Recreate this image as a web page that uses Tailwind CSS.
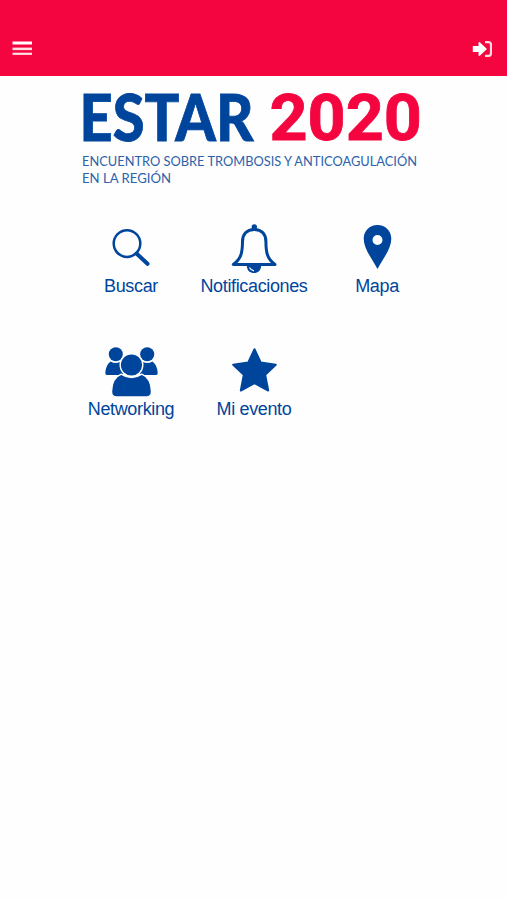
<!DOCTYPE html>
<html lang="es">
<head>
  <meta charset="UTF-8">
  <meta name="viewport" content="width=device-width, initial-scale=1.0">
  <title>ESTAR 2020</title>
  <script src="https://cdn.jsdelivr.net/npm/@tailwindcss/browser@4"></script>
</head>
<body class="min-h-screen bg-[#fefefe] font-['Liberation_Sans',sans-serif] text-[#00459c]">
  <header class="flex h-[76px] items-end justify-between bg-[#f5053f] px-3 pb-[17px] text-white">
    <button aria-label="Menú">
      <svg class="block h-5 w-5" viewBox="0 0 20 20" fill="#ffdfe6">
        <rect x="0.5" y="2.5" width="19.5" height="3" fill="#fff" />
        <rect x="0.5" y="8.6" width="19.5" height="2.5" />
        <rect x="0.5" y="13.7" width="19.5" height="2.2" />
      </svg>
    </button>
    <button aria-label="Ingresar" class="mr-[3px]">
      <svg class="block h-5 w-5" viewBox="0 0 20 20">
        <path d="M0.8 7H6.5V3.6L7.5 3L15 10L7.5 17L6.5 16.4V13H0.8Z" fill="#fff" />
        <path d="M13 3.2H16.5Q19 3.2 19 5.7V14.3Q19 16.8 16.5 16.8H13" fill="none" stroke="#ffdbe3" stroke-width="2.2" />
      </svg>
    </button>
  </header>

  <main>
    <!-- Logo -->
    <svg class="mx-auto block h-[124px] w-[347px] overflow-visible" viewBox="80 76 347 124">
      <g font-family="Lato, sans-serif" fill="#00459c">
        <text x="79.5" y="140.5" font-size="65" font-weight="900" stroke="#00459c" stroke-width="0.8" textLength="174" lengthAdjust="spacingAndGlyphs">ESTAR</text>
        <g font-size="14.2" font-weight="400" fill="#2c62ab">
          <text x="82" y="165.5" textLength="335" lengthAdjust="spacingAndGlyphs">ENCUENTRO SOBRE TROMBOSIS Y ANTICOAGULACIÓN</text>
          <text x="82" y="183.3" textLength="89" lengthAdjust="spacingAndGlyphs">EN LA REGIÓN</text>
        </g>
      </g>
      <text x="269.5" y="140" font-family="Roboto, sans-serif" font-size="65" font-weight="700" fill="#f5053f" stroke="#f5053f" stroke-width="0.8" textLength="152.5" lengthAdjust="spacingAndGlyphs">2020</text>
    </svg>

    <nav class="mx-auto mt-[22px] grid w-[369px] grid-cols-3 gap-y-[48px] text-center text-[18px] leading-[21px] tracking-[-0.36px]">
      <a class="flex flex-col items-center">
        <svg class="h-[54px] w-[60px]" viewBox="0 0 60 54" fill="none" stroke="#00459c">
          <circle cx="26" cy="21.6" r="13.3" stroke-width="2.5" />
          <path d="M35.5 31.5L46.5 41.8" stroke-width="4" stroke-linecap="round" />
        </svg>
        <span class="pl-px">Buscar</span>
      </a>
      <a class="flex flex-col items-center">
        <svg class="h-[54px] w-[60px]" viewBox="0 0 60 54" fill="none" stroke="#00459c">
          <circle cx="30.3" cy="5" r="2.7" fill="#00459c" stroke="none" />
          <path d="M30.3 7.5C22.5 7.5 18.6 12.5 18.5 19.5C18.4 30 17.5 36.5 9.3 42.4H51C42.8 36.5 42 30 41.9 19.5C41.8 12.5 38 7.5 30.3 7.5Z" stroke-width="3" stroke-linejoin="round" />
          <path d="M22.8 44H37.2C36.8 48.5 34 51 30 51C26 51 23.2 48.5 22.8 44Z" fill="#00459c" stroke="none" />
          <path d="M25.5 45.5Q27 48.4 30 48.8" stroke="#fff" stroke-width="1.2" />
        </svg>
        <span class="pl-px">Notificaciones</span>
      </a>
      <a class="flex flex-col items-center">
        <svg class="h-[54px] w-[60px]" viewBox="0 0 60 54" fill="#00459c">
          <path fill-rule="evenodd" d="M30.5 3C22.6 3 16.7 9 16.7 16.7C16.7 26.5 24.5 36 30.5 47C36.5 36 44.3 26.5 44.3 16.7C44.3 9 38.4 3 30.5 3ZM30.5 13A5 5 0 1 1 30.5 23A5 5 0 1 1 30.5 13Z" />
        </svg>
        <span class="pl-px">Mapa</span>
      </a>
      <a class="flex flex-col items-center">
        <svg class="h-[54px] w-[60px]" viewBox="0 0 60 54" fill="#00459c">
          <circle cx="14.8" cy="9.2" r="7" />
          <circle cx="46.2" cy="9.2" r="7" />
          <path d="M9.5 16.6Q14.5 19.4 19 17L22 20V30H6Q4.1 30 4.3 27.5Q4.8 20.5 9.5 16.6Z" />
          <path d="M51.5 16.6Q46.5 19.4 42 17L39 20V30H55Q56.9 30 56.7 27.5Q56.2 20.5 51.5 16.6Z" />
          <path d="M20.2 29.2Q30.5 36 40.8 29.2C46.5 31.5 50.3 38 50.5 46.5Q50.5 52 45.5 52H15.5Q10.5 52 10.5 46.5C10.7 38 14.5 31.5 20.2 29.2Z" stroke="#fefefe" stroke-width="1.4" />
          <circle cx="30.5" cy="20" r="11.3" stroke="#fefefe" stroke-width="1.4" />
        </svg>
        <span class="pl-px">Networking</span>
      </a>
      <a class="flex flex-col items-center">
        <svg class="h-[54px] w-[60px]" viewBox="0 0 60 54" fill="#00459c" stroke="#00459c" stroke-width="2" stroke-linejoin="round">
          <path d="M30.5 4.2L36.8 17.6L51.8 19.7L41.2 29.9L44.2 45.5L30.5 38L16.8 45.5L19.8 29.9L9.2 19.7L24.2 17.6Z" />
        </svg>
        <span class="pl-px">Mi evento</span>
      </a>
    </nav>
  </main>
</body>
</html>
